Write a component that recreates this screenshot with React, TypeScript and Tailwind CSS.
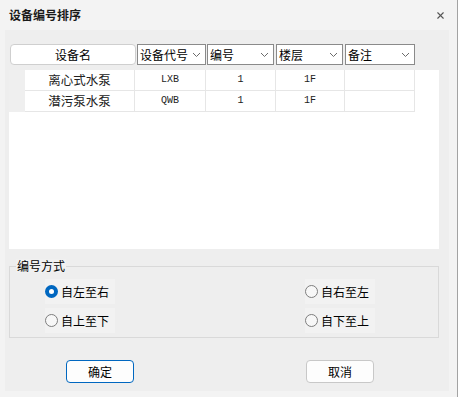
import { X } from 'lucide-react';

type Device = {
  name: string;
  code: string;
  no: string;
  floor: string;
  note: string;
};

const devices: Device[] = [
  { name: '离心式水泵', code: 'LXB', no: '1', floor: '1F', note: '' },
  { name: '潜污泵水泵', code: 'QWB', no: '1', floor: '1F', note: '' }
];

const selectHeaders = [
  { label: '设备代号', width: 'w-[69px]', margin: 'ml-[1px]' },
  { label: '编号', width: 'w-[67px]', margin: 'ml-[1px]' },
  { label: '楼层', width: 'w-[67px]', margin: 'ml-[2px]' },
  { label: '备注', width: 'w-[70px]', margin: 'ml-[2px]' }
];

const radioOptions = [
  [{ label: '自左至右', checked: true }, { label: '自右至左', checked: false }],
  [{ label: '自上至下', checked: false }, { label: '自下至上', checked: false }]
];

const monoFont = { fontFamily: '"Liberation Mono", monospace' };

const Chevron = () => (
  <svg width="9" height="6" viewBox="0 0 9 6" className="shrink-0">
    <polyline points="1,1 4.5,4.5 8,1" fill="none" stroke="#6b6b6b" strokeWidth="1" />
  </svg>
);

const Radio = ({ label, checked }: { label: string; checked: boolean }) => (
  <div className="flex items-center h-[25px] w-[70px] bg-[#f2f2f2]">
    {checked ? (
      <span className="w-[13px] h-[13px] rounded-full bg-[#0067c0] flex items-center justify-center shrink-0">
        <span className="w-[5px] h-[5px] rounded-full bg-white" />
      </span>
    ) : (
      <span className="w-[13px] h-[13px] rounded-full border border-[#7d7d7d] bg-[#f7f7f7] shrink-0" />
    )}
    <span className="ml-[3px] text-[12px] leading-none text-black">{label}</span>
  </div>
);

const App = () => {
  return (
    <div
      className="w-[458px] h-[397px] bg-[#f3f3f3] border-r border-[#a3a3a3] flex flex-col overflow-hidden"
      style={{ fontFamily: '"Noto Sans CJK SC", "Noto Sans", sans-serif' }}
    >
      {/* Title Bar */}
      <div className="h-[30px] flex items-center justify-between pl-[9px] pr-[11px] shrink-0">
        <span className="text-[12px] font-bold text-[#1a1a1a] leading-none">设备编号排序</span>
        <X size={11} strokeWidth={2.4} className="text-[#555]" />
      </div>

      {/* Body */}
      <div className="ml-[5px] w-[444px] h-[361px] bg-[#eeeeee] flex flex-col pl-[4px] shrink-0">
        {/* Column headers */}
        <div className="flex mt-[14px] h-[21px] pl-[1px]">
          <div className="w-[126px] h-full bg-white border border-[#cfcfcf] rounded-[4px] flex items-center justify-center text-[12px] leading-none text-black">
            设备名
          </div>
          {selectHeaders.map((h) => (
            <div
              key={h.label}
              className={`${h.width} ${h.margin} h-full bg-white border border-[#8a8a8a] flex items-center justify-between pl-[2px] pr-[4px] text-[12px] leading-none text-black`}
            >
              <span>{h.label}</span>
              <Chevron />
            </div>
          ))}
        </div>

        {/* Table area */}
        <div className="mt-[5px] w-[430px] h-[179px] bg-white flex flex-col">
          {devices.map((d) => (
            <div key={d.name} className="flex h-[21px] w-[406px]">
              <div className="w-[16px] bg-[#efefef]" />
              <div className="w-[110px] flex items-center justify-center text-[12.5px] leading-none text-[#222] border-r border-b border-[#e6e6e6]">
                {d.name}
              </div>
              <div className="w-[71px] flex items-center justify-center text-[10px] leading-none text-[#222] border-r border-b border-[#e6e6e6]" style={monoFont}>
                {d.code}
              </div>
              <div className="w-[70px] flex items-center justify-center text-[10px] leading-none text-[#222] border-r border-b border-[#e6e6e6]" style={monoFont}>
                {d.no}
              </div>
              <div className="w-[69px] flex items-center justify-center text-[10px] leading-none text-[#222] border-r border-b border-[#e6e6e6]" style={monoFont}>
                {d.floor}
              </div>
              <div className="w-[70px] border-r border-b border-[#e6e6e6]">{d.note}</div>
            </div>
          ))}
        </div>

        {/* Numbering mode group */}
        <fieldset className="mt-[10px] w-[430px] h-[79px] border border-[#d9d9d9] px-0 pt-0 pb-0 m-0 min-w-0">
          <legend className="ml-[6px] px-[1px] text-[12px] leading-[14px] text-black bg-[#f0f0f0]">编号方式</legend>
          <div className="flex flex-col gap-[4px] mt-[6px]">
            {radioOptions.map((row, i) => (
              <div key={i} className="flex pl-[35px]">
                <Radio label={row[0].label} checked={row[0].checked} />
                <div className="ml-[190px]">
                  <Radio label={row[1].label} checked={row[1].checked} />
                </div>
              </div>
            ))}
          </div>
        </fieldset>

        {/* Buttons */}
        <div className="flex mt-[22px] pl-[57px]">
          <button className="w-[68px] h-[23px] bg-[#fdfdfd] border border-[#0067c0] rounded-[4px] text-[12px] leading-none text-black">
            确定
          </button>
          <button className="ml-[172px] w-[68px] h-[23px] bg-[#fdfdfd] border border-[#c8c8c8] rounded-[4px] text-[12px] leading-none text-black">
            取消
          </button>
        </div>
      </div>
    </div>
  );
};

export default App;
